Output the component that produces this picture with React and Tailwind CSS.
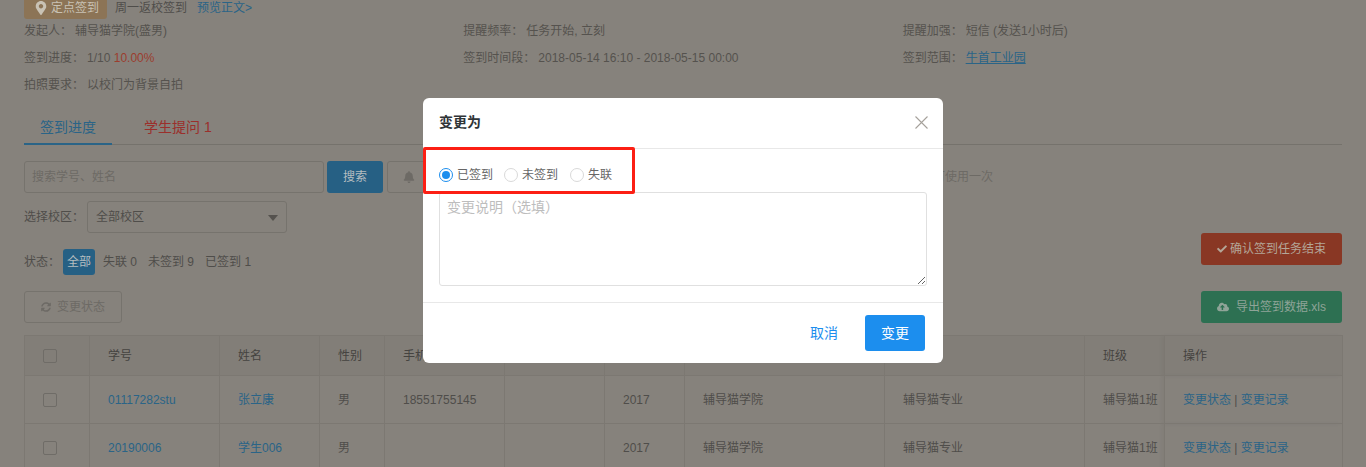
import { FaBell, FaCheck, FaCloudUploadAlt, FaMapMarkerAlt, FaSyncAlt } from 'react-icons/fa';

const rows = [
  { no: '01117282stu', name: '张立康', phone: '18551755145' },
  { no: '20190006', name: '学生006', phone: '' },
];

function Info({ label, children }) {
  return (
    <div className="h-[27px] leading-[27px]">
      <span className="mr-[3px]">{label}</span>
      {children}
    </div>
  );
}

function Radio({ checked, label, className = 'mr-[11px]' }) {
  return (
    <label className={`flex items-center gap-1 text-[#666] ${className}`}>
      <span className={`flex h-3.5 w-3.5 items-center justify-center rounded-full border bg-white ${checked ? 'border-[#1c8eee]' : 'border-[#d9d9d9]'}`}>
        {checked && <span className="h-2 w-2 rounded-full bg-[#1c8eee]" />}
      </span>
      {label}
    </label>
  );
}

function Checkbox() {
  return <span className="block h-[14px] w-[14px] rounded-[2px] border border-[#6f6c67]" />;
}

export default function App() {
  return (
    <div className="relative h-[467px] w-[1366px] overflow-hidden bg-[#86827c] text-xs text-[#4f4d4a] font-['Liberation_Sans','Noto_Sans_CJK_SC',sans-serif]">
      <div className="px-6">
        <div className="-mt-[3px] flex h-[22px] items-center">
          <span className="flex h-[22px] w-[83px] items-center gap-1 rounded-[3px] bg-[#8c7456] pl-[11px] text-[#c9c2b4]">
            <FaMapMarkerAlt className="h-3.5 w-3" />
            定点签到
          </span>
          <span className="ml-2 text-[#4f4d4a]">周一返校签到</span>
          <a className="ml-[10px] text-[#2a6487]">预览正文&gt;</a>
        </div>

        <div className="-mt-px grid grid-cols-3 text-[#55524e]">
          <Info label="发起人：">辅导猫学院(盛男)</Info>
          <Info label="提醒频率：">任务开始, 立刻</Info>
          <Info label="提醒加强：">短信 (发送1小时后)</Info>
          <Info label="签到进度：">
            1/10 <span className="text-[#9c3d2e]">10.00%</span>
          </Info>
          <Info label="签到时间段：">2018-05-14 16:10 - 2018-05-15 00:00</Info>
          <Info label="签到范围：">
            <a className="text-[#2a6487] underline">牛首工业园</a>
          </Info>
          <Info label="拍照要求：">以校门为背景自拍</Info>
        </div>

        <div className="mt-[11px] flex h-[35px] border-b border-[#75726c] text-sm">
          <div className="-mb-px w-[88px] border-b-2 border-[#2a6487] pt-[7px] text-center text-[#2a6487]">签到进度</div>
          <div className="ml-8 pt-[7px] text-[#9b2f2b]">学生提问 1</div>
        </div>

        <div className="mt-4 flex h-8 items-center">
          <input
            placeholder="搜索学号、姓名"
            className="h-8 w-[300px] rounded-[3px] border border-[#76736d] bg-transparent px-[7px] text-xs placeholder:text-[#6d6a65]"
          />
          <button className="ml-[3px] h-8 w-14 rounded-[3px] bg-[#266084] text-[#b5bdc0]">搜索</button>
          <button className="ml-1 flex h-8 w-[200px] items-center rounded-[3px] border border-[#76736d] pl-[15px] text-[#6d6a65]">
            <FaBell className="h-3 w-3" />
          </button>
          <span className="ml-[322px] text-[#6d6a65]">每天可使用一次</span>
        </div>

        <div className="flex justify-between">
          <div>
            <div className="mt-2 flex items-center">
              <span>选择校区：</span>
              <div className="relative ml-[3px] flex h-8 w-[200px] items-center rounded-[3px] border border-[#76736d] pl-[8px] text-[#4f4d4a]">
                全部校区
                <span className="absolute right-2 top-[13px] border-x-[5px] border-t-[6px] border-x-transparent border-t-[#55524e]" />
              </div>
            </div>
            <div className="mt-4 flex h-[26px] items-center">
              <span>状态：</span>
              <span className="ml-[3px] flex h-[26px] w-8 items-center justify-center rounded-[3px] bg-[#266084] text-[#b5bdc0]">全部</span>
              <span className="ml-2">失联 0</span>
              <span className="ml-[11px]">未签到 9</span>
              <span className="ml-[11px]">已签到 1</span>
            </div>
          </div>
          <button className="mt-10 flex h-8 w-[141px] items-center justify-center gap-[3px] rounded-[3px] bg-[#893724] text-[#b4a698]">
            <FaCheck className="h-2.5 w-2.5" />
            确认签到任务结束
          </button>
        </div>

        <div className="mt-4 flex justify-between">
          <button className="flex h-8 w-[98px] items-center justify-center gap-[6px] rounded-[3px] border border-[#76736d] text-[#6d6a65]">
            <FaSyncAlt className="h-2.5 w-2.5" />
            变更状态
          </button>
          <button className="flex h-8 w-[141px] items-center justify-center gap-[7px] rounded-[3px] bg-[#2d7052] text-[#8fa498]">
            <FaCloudUploadAlt className="h-3 w-3" />
            导出签到数据.xls
          </button>
        </div>

        <table className="mt-3 w-[1318px] table-fixed border-collapse border border-[#76736d]">
          <colgroup>
            <col className="w-[65px]" />
            <col className="w-[130px]" />
            <col className="w-[100px]" />
            <col className="w-[65px]" />
            <col className="w-[120px]" />
            <col className="w-[100px]" />
            <col className="w-[80px]" />
            <col className="w-[200px]" />
            <col className="w-[200px]" />
            <col className="w-[80px]" />
            <col className="w-[178px]" />
          </colgroup>
          <thead>
            <tr className="h-10 bg-[#827e78] text-left">
              <th className="border border-[#7c7872] pl-[18px]"><Checkbox /></th>
              <th className="border border-[#7c7872] pl-[18px] font-normal text-[#454340]">学号</th>
              <th className="border border-[#7c7872] pl-[18px] font-normal text-[#454340]">姓名</th>
              <th className="border border-[#7c7872] pl-[18px] font-normal text-[#454340]">性别</th>
              <th className="border border-[#7c7872] pl-[18px] font-normal text-[#454340]">手机</th>
              <th className="border border-[#7c7872]" />
              <th className="border border-[#7c7872]" />
              <th className="border border-[#7c7872]" />
              <th className="border border-[#7c7872]" />
              <th className="border border-[#7c7872] pl-[18px] font-normal text-[#454340]">班级</th>
              <th className="border border-[#7c7872] pl-[18px] font-normal text-[#454340] shadow-[-3px_0_4px_rgba(0,0,0,0.04)]">操作</th>
            </tr>
          </thead>
          <tbody>
            {rows.map((row) => (
              <tr key={row.no} className="h-12">
                <td className="border border-[#7c7872] pl-[18px]"><Checkbox /></td>
                <td className="border border-[#7c7872] pl-[18px] text-[#2a6487]">{row.no}</td>
                <td className="border border-[#7c7872] pl-[18px] text-[#2a6487]">{row.name}</td>
                <td className="border border-[#7c7872] pl-[18px]">男</td>
                <td className="border border-[#7c7872] pl-[18px]">{row.phone}</td>
                <td className="border border-[#7c7872]" />
                <td className="border border-[#7c7872] pl-[18px]">2017</td>
                <td className="border border-[#7c7872] pl-[18px]">辅导猫学院</td>
                <td className="border border-[#7c7872] pl-[18px]">辅导猫专业</td>
                <td className="border border-[#7c7872] pl-[18px]">辅导猫1班</td>
                <td className="border border-[#7c7872] pl-[18px] shadow-[-3px_0_4px_rgba(0,0,0,0.04)]">
                  <a className="text-[#2a6487]">变更状态</a> | <a className="text-[#2a6487]">变更记录</a>
                </td>
              </tr>
            ))}
          </tbody>
        </table>
      </div>

      <div className="absolute left-[423px] top-[98px] flex h-[265px] w-[520px] flex-col rounded-md bg-white">
        <div className="flex h-[51px] items-center justify-between border-b border-[#e8e8e8] pl-4 pr-[15px] pb-[2px]">
          <span className="text-sm font-bold text-[#2f3437]">变更为</span>
          <svg width="13" height="13" viewBox="0 0 13 13" fill="none" stroke="#a5a19b" strokeWidth="1.1">
            <path d="M0.5 0.5 12.5 12.5M12.5 0.5 0.5 12.5" />
          </svg>
        </div>
        <div className="flex-1 border-b border-[#e8e8e8] px-4">
          <div className="mt-[18px] flex h-4 items-center">
            <Radio checked label="已签到" />
            <Radio label="未签到" className="mr-3" />
            <Radio label="失联" />
          </div>
          <textarea
            placeholder="变更说明（选填）"
            className="mt-[9px] block h-[94px] w-[488px] rounded-[3px] border border-[#e0e0e0] px-[7px] py-[4px] text-sm placeholder:text-[#bdbdbd]"
          />
        </div>
        <div className="flex h-[60px] items-center justify-end pr-[18px] text-sm">
          <span className="mr-[27px] text-[#1c8eee]">取消</span>
          <button className="h-9 w-[60px] rounded-[3px] bg-[#1c8eee] text-white">变更</button>
        </div>
      </div>

      <div className="absolute left-[423px] top-[147px] h-[47px] w-[212px] rounded-[2px] border-[3px] border-[#fc1f14]" />
    </div>
  );
}
